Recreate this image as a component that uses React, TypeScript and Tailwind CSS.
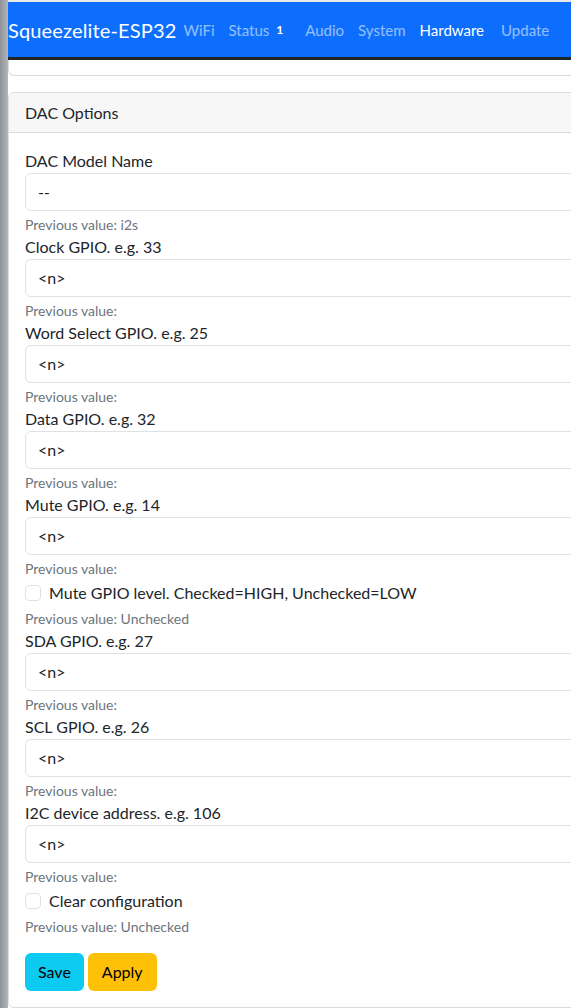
import React from 'react';

const font = { fontFamily: 'Lato, "Noto Sans", sans-serif' };

const fields = [
  { label: 'Clock GPIO. e.g. 33' },
  { label: 'Word Select GPIO. e.g. 25' },
  { label: 'Data GPIO. e.g. 32' },
  { label: 'Mute GPIO. e.g. 14' },
];
const fields2 = [
  { label: 'SDA GPIO. e.g. 27' },
  { label: 'SCL GPIO. e.g. 26' },
  { label: 'I2C device address. e.g. 106' },
];

function TextField({ label, value, prev }: { label: string; value: string; prev: string }) {
  return (
    <div>
      <label className="block text-[16px] leading-6 text-[#212529]">{label}</label>
      <div className="h-[38px] border border-[#dee2e6] rounded-[6px] px-3 flex items-center text-[16px] text-[#212529]">
        {value}
      </div>
      <div className="mt-[3px] text-[14px] leading-[21px] text-[#6c757d]">Previous value:{prev ? ' ' + prev : ''}</div>
    </div>
  );
}

function CheckField({ label, prev }: { label: string; prev: string }) {
  return (
    <div>
      <div className="mt-[2px] flex items-center h-6">
        <span className="w-4 h-4 border border-[#dee2e6] rounded-[4px] bg-white" />
        <span className="ml-2 text-[16px] text-[#212529]">{label}</span>
      </div>
      <div className="mt-[3px] text-[14px] leading-[21px] text-[#6c757d]">Previous value: {prev}</div>
    </div>
  );
}

export default function App() {
  return (
    <div className="w-[571px] h-[1008px] overflow-hidden flex bg-white" style={font}>
      <div className="w-[8px] shrink-0 bg-gradient-to-r from-[#8e9296] to-[#b4b7ba]" />
      <div className="flex-1 min-w-0">
        <div className="h-[2px] bg-[#e8e8e8]" />
        <nav className="h-[55px] bg-[#0d6efd] flex items-center whitespace-nowrap overflow-hidden">
          <span className="text-[20px] text-white tracking-[0.15px]">Squeezelite-ESP32</span>
          <div className="flex items-center text-[15px] text-white/55 pt-px">
            <span className="px-[7px]">WiFi</span>
            <span className="px-[7px] flex items-center">Status<span className="ml-[7px] text-[12px] font-bold text-white">1</span></span>
            <span className="px-[7px] ml-[8px]">Audio</span>
            <span className="px-[7px]">System</span>
            <span className="px-[7px] text-white">Hardware</span>
            <span className="px-[7px] ml-[3px]">Update</span>
          </div>
        </nav>
        <div className="h-[3px] bg-[#212529]" />
        <div className="w-[620px]">
          <div className="h-[16px] border border-t-0 border-[#dcdcdc] rounded-b-[6px]" />
          <div className="mt-[16px] border border-[#dcdcdc] rounded-[6px]">
            <div className="h-[40px] bg-[#f7f7f7] border-b border-[#dcdcdc] rounded-t-[6px] flex items-center px-4 text-[16px] text-[#212529]">
              DAC Options
            </div>
            <div className="px-4 pt-4 pb-4">
              <TextField label="DAC Model Name" value="--" prev="i2s" />
              {fields.map((f) => (
                <TextField key={f.label} label={f.label} value="<n>" prev="" />
              ))}
              <CheckField label="Mute GPIO level. Checked=HIGH, Unchecked=LOW" prev="Unchecked" />
              {fields2.map((f) => (
                <TextField key={f.label} label={f.label} value="<n>" prev="" />
              ))}
              <CheckField label="Clear configuration" prev="Unchecked" />
              <div className="mt-[16px] flex gap-1">
                <button className="h-[38px] px-[13px] rounded-[6px] bg-[#0dcaf0] text-[16px] text-black">Save</button>
                <button className="h-[38px] px-[14px] rounded-[6px] bg-[#ffc107] text-[16px] text-black">Apply</button>
              </div>
            </div>
          </div>
        </div>
      </div>
    </div>
  );
}
